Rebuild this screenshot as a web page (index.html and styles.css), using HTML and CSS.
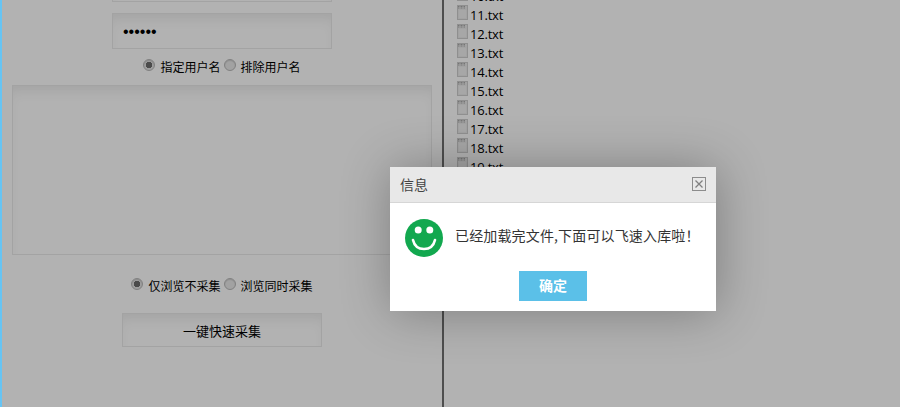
FILE: index.html
```html
<!DOCTYPE html>
<html lang="zh">
<head>
<meta charset="utf-8">
<title>采集</title>
<link rel="stylesheet" href="styles.css">
</head>
<body>
<div class="page">
  <div class="edge"></div>
  <div class="stage">
    <section class="left">
      <div class="left-inner">
        <input class="field" type="text">
        <input class="field field-pass" type="password" value="123456">
        <div class="choice choice-user">
          <input type="radio" name="u" checked><span>指定用户名</span>
          <input type="radio" name="u"><span>排除用户名</span>
        </div>
        <textarea class="area"></textarea>
        <div class="choice choice-mode">
          <input type="radio" name="m" checked><span>仅浏览不采集</span>
          <input type="radio" name="m"><span>浏览同时采集</span>
        </div>
        <button class="collect" type="button">一键快速采集</button>
      </div>
    </section>
    <section class="right">
      <ul class="files">
        <li><svg class="doc" viewBox="0 0 11 15"><use href="#doc"/></svg>10.txt</li>
        <li><svg class="doc" viewBox="0 0 11 15"><use href="#doc"/></svg>11.txt</li>
        <li><svg class="doc" viewBox="0 0 11 15"><use href="#doc"/></svg>12.txt</li>
        <li><svg class="doc" viewBox="0 0 11 15"><use href="#doc"/></svg>13.txt</li>
        <li><svg class="doc" viewBox="0 0 11 15"><use href="#doc"/></svg>14.txt</li>
        <li><svg class="doc" viewBox="0 0 11 15"><use href="#doc"/></svg>15.txt</li>
        <li><svg class="doc" viewBox="0 0 11 15"><use href="#doc"/></svg>16.txt</li>
        <li><svg class="doc" viewBox="0 0 11 15"><use href="#doc"/></svg>17.txt</li>
        <li><svg class="doc" viewBox="0 0 11 15"><use href="#doc"/></svg>18.txt</li>
        <li><svg class="doc" viewBox="0 0 11 15"><use href="#doc"/></svg>19.txt</li>
      </ul>
    </section>
    <div class="shade"></div>
  </div>
  <div class="dialog">
    <header class="dialog-head">
      <span class="dialog-title">信息</span>
      <svg class="dialog-close" viewBox="0 0 14 14"><rect x=".5" y=".5" width="13" height="13" fill="none" stroke="#8c8c8c"/><path d="M3.500 3.500l7 7M10.500 3.500l-7 7" stroke="#808080" stroke-width="1.300" fill="none"/></svg>
    </header>
    <div class="dialog-body">
      <svg class="smile" viewBox="0 0 38 38">
        <circle cx="19" cy="19" r="19" fill="#12a84f"/>
        <circle cx="13.200" cy="11" r="3.500" fill="#fff"/>
        <circle cx="24.800" cy="11" r="3.500" fill="#fff"/>
        <path d="M8 21C9.500 27.500 14 30 19 30S28.500 27.500 30 21" fill="none" stroke="#fff" stroke-width="2.600" stroke-linecap="round"/>
      </svg>
      <p class="dialog-text">已经加载完文件,下面可以飞速入库啦！</p>
    </div>
    <div class="dialog-foot"><button class="confirm" type="button">确定</button></div>
  </div>
</div>
<svg class="defs" width="0" height="0">
  <symbol id="doc" viewBox="0 0 11 15">
    <rect x=".5" y=".5" width="10" height="14" fill="#e8e8e8" stroke="#cdcdcd"/>
    <path d="M1 1.500h7M1 3h7" stroke="#a8a8a8" stroke-width="1" stroke-dasharray="1 .5" fill="none"/>
    <rect x="2" y="5" width="7" height="8" fill="#f0f0f0"/>
  </symbol>
</svg>
</body>
</html>
```
FILE: styles.css
```css
* { box-sizing: border-box; }
html, body { margin: 0; height: 100%; overflow: hidden; }
body { font-family: "Open Sans", "Noto Sans CJK SC", sans-serif; background: #fff; color: #000; }
.page { position: relative; display: flex; width: 900px; height: 407px; overflow: hidden; }
.edge { width: 2px; background: #66c4f4; flex: none; }
.stage { position: relative; flex: 1; display: flex; min-width: 0; }
.left { width: 440px; flex: none; overflow: hidden; }
.left-inner { display: flex; flex-direction: column; align-items: center; margin-top: -34px; }
.field, .area, .collect { border: 1px solid #eaeaea; background: #fff; box-shadow: inset 0 10px 14px -6px rgba(0,0,0,.09); outline: none; }
.field { width: 220px; height: 36px; flex: none; margin: 0; padding: 2px 10px 0; font: 16px "Liberation Sans", sans-serif; color: #000; }
.field-pass { margin-top: 11px; }
.choice { display: flex; align-items: center; font-size: 12px; line-height: 18px; font-family: "Noto Sans CJK SC", sans-serif; }
.choice input { appearance: none; width: 12px; height: 12px; margin: -5px 5px 0 0; border: 1px solid #b8b8b8; border-radius: 50%; background: #e8e8e8; box-shadow: inset 0 1px 1px rgba(0,0,0,.12); }
.choice input:checked { background: radial-gradient(circle, #6c6c6c 0 3px, #e2e2e2 3.500px); }
.choice span { margin-right: 3px; }
.choice span:last-child { margin-right: 0; }
.choice-user { margin-top: 9px; height: 18px; }
.choice-mode { margin-top: 21px; height: 20px; }
.area { display: block; width: 420px; height: 170px; margin: 9px 0 0; resize: none; }
.collect { display: block; width: 200px; height: 34px; margin-top: 17px; padding: 0; font: 13px "Noto Sans CJK SC", sans-serif; color: #000; }
.right { flex: 1; border-left: 2px solid #707070; padding-left: 13px; overflow: hidden; }
.files { list-style: none; margin: -14px 0 0; padding: 0; font-size: 13px; letter-spacing: -.2px; }
.files li { display: flex; align-items: flex-start; height: 19px; line-height: 21px; }
.doc { width: 11px; height: 15px; margin: 0 2px 0 0; flex: none; }
.shade { position: absolute; inset: 0; background: rgba(0,0,0,.3); }
.defs { position: absolute; }
.dialog { position: absolute; left: 390px; top: 167px; width: 326px; height: 144px; background: #fff; box-shadow: 1px 1px 50px rgba(0,0,0,.3); display: flex; flex-direction: column; font-family: "Noto Sans CJK SC", sans-serif; }
.dialog-head { display: flex; align-items: center; justify-content: space-between; height: 36px; flex: none; padding: 0 10px 1px; background: #e8e8e8; border-bottom: 1px solid #d6d6d6; }
.dialog-title { font-size: 14px; color: #444; line-height: 20px; margin-top: -1px; }
.dialog-close { width: 14px; height: 14px; display: block; }
.dialog-body { display: flex; align-items: center; padding: 16px 15px 0; }
.smile { width: 38px; height: 38px; flex: none; display: block; }
.dialog-text { margin: -6px 0 0 12px; font-size: 14px; letter-spacing: .15px; color: #333; white-space: nowrap; }
.dialog-foot { display: flex; justify-content: center; margin-top: 14px; }
.confirm { width: 68px; height: 30px; border: 0; padding: 0 0 2px; background: #5bc0e8; color: #fff; font: bold 14px "Noto Sans CJK SC", sans-serif; }
```
